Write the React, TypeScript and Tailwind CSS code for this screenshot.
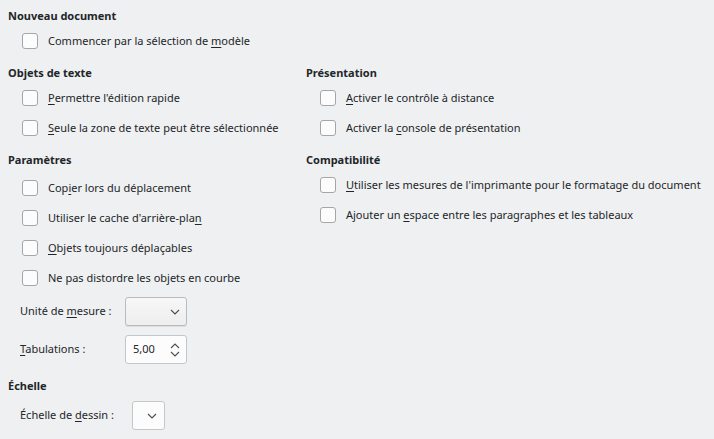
import React from 'react';

type Item = { before: string; k: string; after: string };

function Label({ before, k, after }: Item) {
  return (
    <span>
      {before}
      <u className="underline-offset-2">{k}</u>
      {after}
    </span>
  );
}

function Check({ item }: { item: Item }) {
  return (
    <div className="flex h-[30px] items-center gap-[10px] pl-[14px]">
      <span className="h-[16px] w-[16px] shrink-0 rounded-[3px] border border-[#a4a6a8] bg-[#fcfcfc]" />
      <Label {...item} />
    </div>
  );
}

function Heading({ children }: { children: React.ReactNode }) {
  return <div className="h-[16px] leading-[16px] font-bold">{children}</div>;
}

const Chevron = ({ up = false }: { up?: boolean }) => (
  <svg width="10" height="6" viewBox="0 0 10 6" className="shrink-0">
    <polyline
      points={up ? '1,5 5,1 9,5' : '1,1 5,5 9,1'}
      fill="none"
      stroke="#4d4d4d"
      strokeWidth="1.1"
    />
  </svg>
);

export default function App() {
  return (
    <div className="h-[439px] w-[714px] overflow-hidden bg-[#eff0f1] pl-[8px] pt-[8px] font-['Noto_Sans',sans-serif] text-[11px] text-[#232629]">
      <Heading>Nouveau document</Heading>
      <div className="mt-[2px]">
        <Check item={{ before: 'Commencer par la sélection de ', k: 'm', after: 'odèle' }} />
      </div>

      <div className="mt-[9px] grid grid-cols-[298px_1fr]">
        {/* left column */}
        <div>
          <Heading>Objets de texte</Heading>
          <div className="mt-[2px]">
            <Check item={{ before: '', k: 'P', after: "ermettre l'édition rapide" }} />
            <Check item={{ before: '', k: 'S', after: 'eule la zone de texte peut être sélectionnée' }} />
          </div>

          <div className="mt-[9px]">
            <Heading>Paramètres</Heading>
            <div className="mt-[5px]">
              <Check item={{ before: 'Cop', k: 'i', after: 'er lors du déplacement' }} />
              <Check item={{ before: "Utiliser le cache d'arrière-pla", k: 'n', after: '' }} />
              <Check item={{ before: '', k: 'O', after: 'bjets toujours déplaçables' }} />
              <Check item={{ before: 'Ne pas distordre les ob', k: 'j', after: 'ets en courbe' }} />
            </div>
          </div>

          <div className="mt-[4px] flex h-[29px] items-center pl-[12px]">
            <span className="w-[105px]">
              <Label before="Unité de " k="m" after="esure :" />
            </span>
            <div className="flex h-[29px] w-[62px] items-center justify-end rounded-[3px] border border-[#b9bbbd] bg-gradient-to-b from-[#f7f7f7] to-[#eeeeee] pr-[6px] shadow-[0_1px_0_rgba(0,0,0,0.08)]">
              <Chevron />
            </div>
          </div>

          <div className="mt-[9px] flex h-[29px] items-center pl-[12px]">
            <span className="w-[105px]">
              <Label before="" k="T" after="abulations :" />
            </span>
            <div className="flex h-[29px] w-[62px] items-center justify-between rounded-[3px] border border-[#c4c6c8] bg-[#fcfcfc] pl-[7px] pr-[6px]">
              <span>5,00</span>
              <span className="flex flex-col gap-[2px]">
                <Chevron up />
                <Chevron />
              </span>
            </div>
          </div>

          <div className="mt-[14px]">
            <Heading>Échelle</Heading>
          </div>
          <div className="mt-[7px] flex h-[29px] items-center pl-[12px]">
            <span className="w-[112px]">
              <Label before="Échelle de " k="d" after="essin :" />
            </span>
            <div className="flex h-[29px] w-[33px] items-center justify-end rounded-[3px] border border-[#c4c6c8] bg-[#fcfcfc] pr-[7px]">
              <Chevron />
            </div>
          </div>
        </div>

        {/* right column */}
        <div>
          <Heading>Présentation</Heading>
          <div className="mt-[2px]">
            <Check item={{ before: '', k: 'A', after: 'ctiver le contrôle à distance' }} />
            <Check item={{ before: 'Activer la ', k: 'c', after: 'onsole de présentation' }} />
          </div>
          <div className="mt-[9px]">
            <Heading>Compatibilité</Heading>
            <div className="mt-[2px]">
              <Check item={{ before: '', k: 'U', after: "tiliser les mesures de l'imprimante pour le formatage du document" }} />
              <Check item={{ before: 'Ajouter un ', k: 'e', after: 'space entre les paragraphes et les tableaux' }} />
            </div>
          </div>
        </div>
      </div>
    </div>
  );
}
